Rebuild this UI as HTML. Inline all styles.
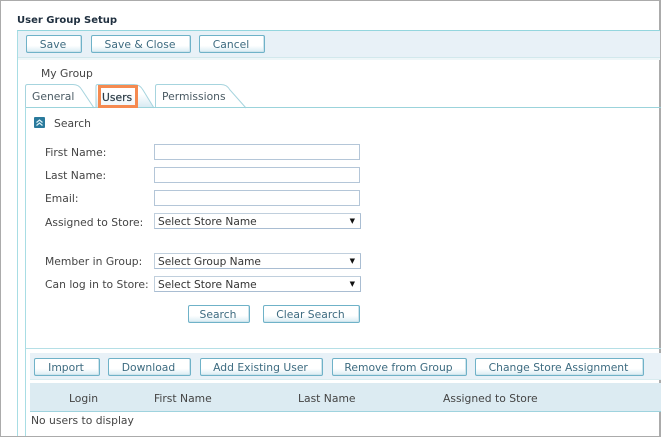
<!DOCTYPE html>
<html><head><meta charset="utf-8"><style>
html,body{margin:0;padding:0;background:#fff}
#p{position:relative;width:661px;height:437px;overflow:hidden;background:#fff;font-family:"DejaVu Sans","Liberation Sans",sans-serif;font-size:10.75px;color:#444}
#p div,#p svg{position:absolute;box-sizing:border-box}
.t{white-space:nowrap;line-height:14px}
.b{border:1px solid #6fb2c8;border-radius:2px;background:linear-gradient(#fff 60%,#d9ecf3);color:#3d6b80;text-align:center;height:18px;line-height:17px;white-space:nowrap;box-shadow:inset -1px -1px 0 #cfe4ec;padding-right:2px}
.i{border:1px solid #b4c6d8;background:#fff;height:16px;left:154px;width:206px}
.s{border:1px solid #a9bdd2;background:#fff;height:16px;left:154px;width:207px;color:#333;padding-left:3px;line-height:16px;white-space:nowrap;border-top-color:#c0cfdd;border-left-color:#c0cfdd;font-size:10.6px}
.s span{position:absolute;right:5px;top:0;font-size:7px;line-height:14px;color:#111}
.h{color:#4a5a63}
</style></head><body><div id="p">
<div style="left:0;top:0;width:661px;height:437px;border:1px solid #ababab;border-right:2px solid #ababab"></div>
<div class="t" style="left:17px;top:14px;font-weight:bold;color:#1f2f3f;font-size:10px">User Group Setup</div>
<div style="left:17px;top:30px;width:643px;height:406px;border-left:1px solid #a8dde4;border-top:1px solid #94d6de"></div>
<div style="left:18px;top:31px;width:642px;height:27px;background:#e8f1f7;border-bottom:1px solid #d2e8ec;box-shadow:0 2px 0 #eef6f8"></div>
<div class="b" style="left:26px;top:35px;width:56px">Save</div>
<div class="b" style="left:91px;top:35px;width:100px">Save &amp; Close</div>
<div class="b" style="left:199px;top:35px;width:66px">Cancel</div>
<div class="t" style="left:41px;top:67px">My Group</div>

<svg style="left:24px;top:83px" width="230" height="26" viewBox="0 0 230 26">
<defs><linearGradient id="g" x1="0" y1="0" x2="0" y2="1"><stop offset="0.4" stop-color="#fff"/><stop offset="1" stop-color="#d5e9f2"/></linearGradient></defs>
<path d="M1.500 25V3.500Q1.500 1.500 3.500 1.500H49Q55 1.500 58 7L70 25" fill="#fff" stroke="#a6d4de"/>
<path d="M72 25V3.500Q72 1.500 74 1.500H110Q116 1.500 119 7L130 25" fill="url(#g)" stroke="#a6d4de"/>
<path d="M131.500 25V3.500Q131.500 1.500 133.500 1.500H197Q203 1.500 206 7L222 25" fill="#fff" stroke="#a6d4de"/>
</svg>
<div style="left:25px;top:107px;width:636px;height:1px;background:#9bd3db"></div>
<div style="left:25px;top:107px;width:1px;height:330px;background:#a8dde4"></div>
<div class="t h" style="left:32px;top:90px">General</div>
<div style="left:98px;top:85px;width:40px;height:23px;border:3px solid #f58a50;background:rgba(255,255,255,.55)"></div>
<div class="t" style="left:102px;top:91px;color:#2d3c46;-webkit-text-stroke:.2px #2d3c46">Users</div>
<div class="t h" style="left:162px;top:90px">Permissions</div>

<svg style="left:34px;top:117px" width="11" height="11" viewBox="0 0 11 11"><rect width="11" height="11" rx="1" fill="#2a7a9c"/><path d="M2.500 5.500L5.500 3L8.500 5.500M2.500 8.500L5.500 6L8.500 8.500" fill="none" stroke="#dff1f7" stroke-width="1.200"/></svg>
<div class="t" style="left:54px;top:117px">Search</div>

<div class="t" style="left:45px;top:146px">First Name:</div><div class="i" style="top:144px"></div>
<div class="t" style="left:45px;top:169px">Last Name:</div><div class="i" style="top:167px"></div>
<div class="t" style="left:45px;top:192px">Email:</div><div class="i" style="top:190px"></div>
<div class="t" style="left:45px;top:216px">Assigned to Store:</div><div class="s" style="top:213px">Select Store Name<span>▼</span></div>
<div class="t" style="left:45px;top:255px">Member in Group:</div><div class="s" style="top:253px">Select Group Name<span>▼</span></div>
<div class="t" style="left:45px;top:278px">Can log in to Store:</div><div class="s" style="top:276px">Select Store Name<span>▼</span></div>
<div class="b" style="left:188px;top:305px;width:62px">Search</div>
<div class="b" style="left:263px;top:305px;width:97px">Clear Search</div>

<div style="left:26px;top:348px;width:635px;height:1px;background:#b5dfe6"></div>
<div style="left:30px;top:353px;width:631px;height:26px;background:#e8f1f7"></div>
<div style="left:30px;top:379px;width:631px;height:1px;background:#d8ebef"></div>
<div class="b" style="left:34px;top:358px;width:66px">Import</div>
<div class="b" style="left:108px;top:358px;width:83px">Download</div>
<div class="b" style="left:200px;top:358px;width:123px">Add Existing User</div>
<div class="b" style="left:332px;top:358px;width:135px">Remove from Group</div>
<div class="b" style="left:475px;top:358px;width:169px">Change Store Assignment</div>
<div style="left:30px;top:383px;width:631px;height:29px;background:#dcebf2;border-bottom:1px solid #9fd3de"></div>
<div class="t" style="left:69px;top:392px">Login</div>
<div class="t" style="left:154px;top:392px">First Name</div>
<div class="t" style="left:298px;top:392px">Last Name</div>
<div class="t" style="left:443px;top:392px">Assigned to Store</div>
<div class="t" style="left:31px;top:414px">No users to display</div>
<div style="left:0;top:436px;width:661px;height:1px;background:#ababab"></div>
</div></body></html>
